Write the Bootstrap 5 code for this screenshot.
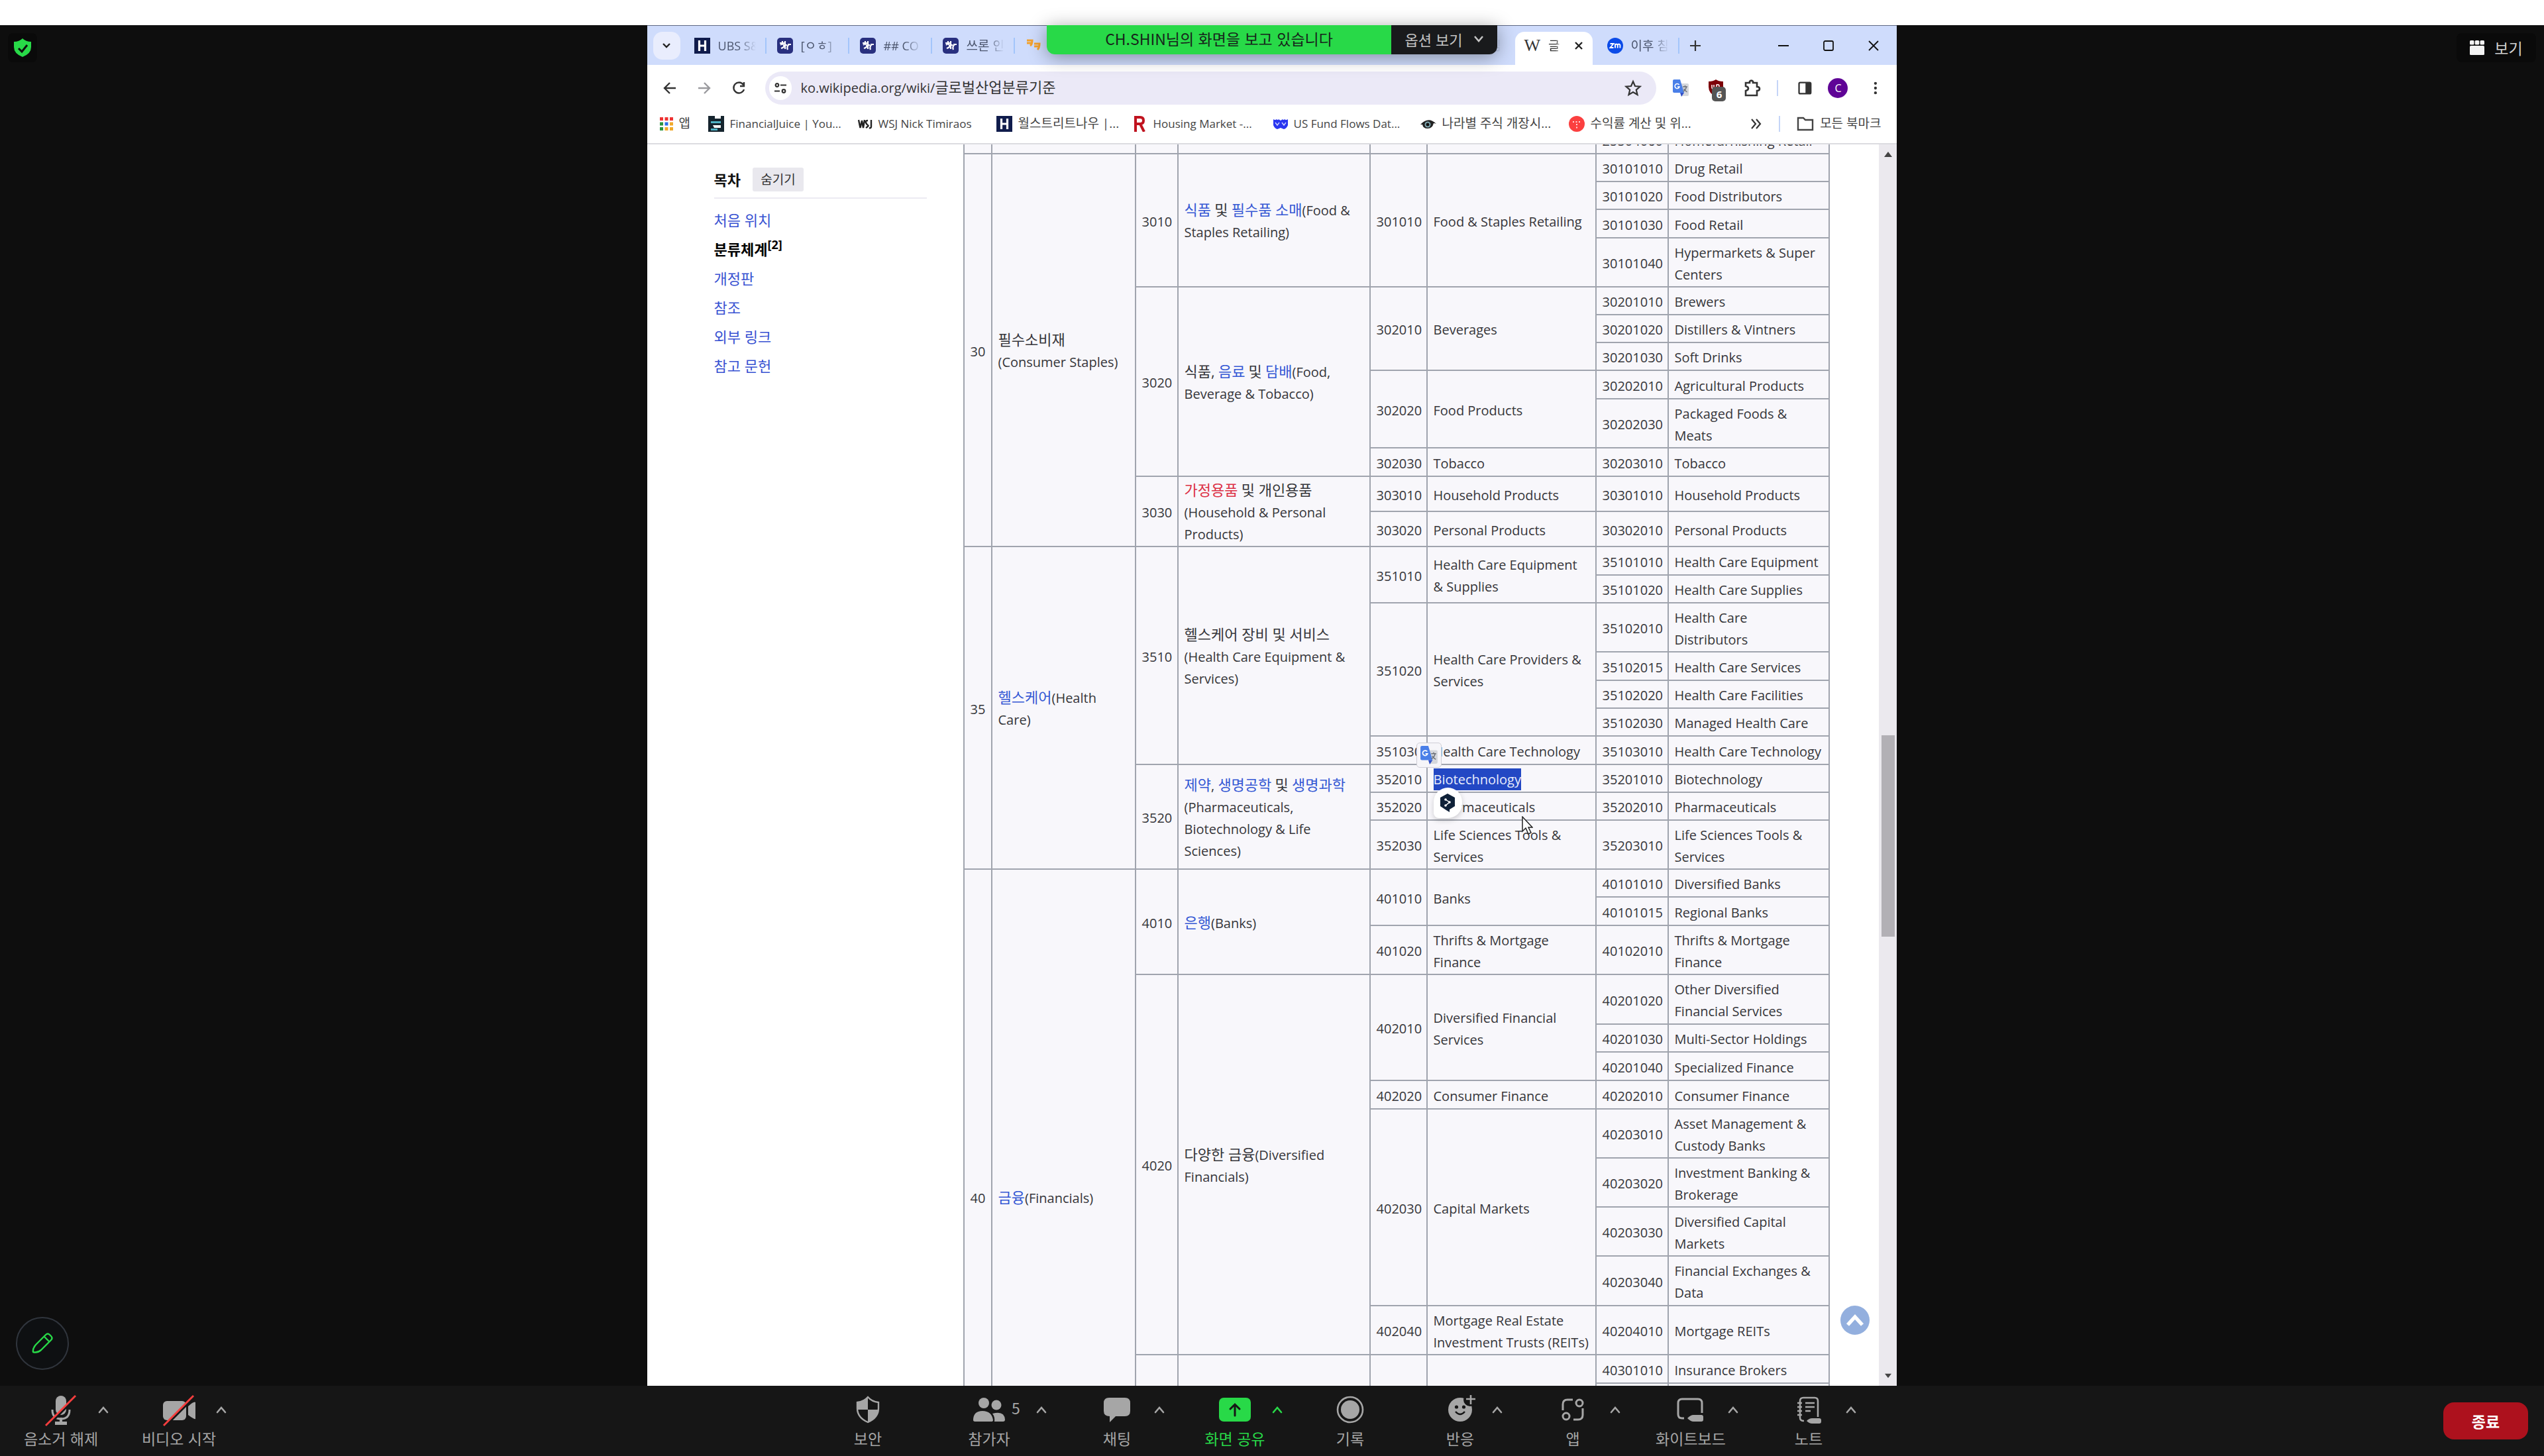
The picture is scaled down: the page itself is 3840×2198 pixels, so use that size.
<!DOCTYPE html>
<html lang="ko">
<head>
<meta charset="utf-8">
<meta name="viewport" content="width=device-width, initial-scale=1">
<title>글로벌산업분류기준</title>
<link href="https://cdn.jsdelivr.net/npm/bootstrap@5.3.0/dist/css/bootstrap.min.css" rel="stylesheet">
<style>
html,body{height:100%}
body{font-family:"Noto Sans CJK KR","Open Sans",sans-serif;background:#fff;padding-top:38px;overflow:hidden}
svg{display:block;flex:none}
button{color:inherit}
.bare{background:none;border:0;padding:0;color:inherit;display:flex;align-items:center;justify-content:center}
/* meeting stage */
.stage{background:#0e0e0e;min-height:0}
.shield{left:12px;top:12px;width:44px;height:44px;border-radius:8px;background:#0a0a0a}
.viewbtn{right:12px;top:12px;width:120px;height:44px;border-radius:8px;background:#0a0a0a;color:#d0d0d0;font-size:23px;gap:15px}
.pen{left:24px;bottom:24px;width:80px;height:80px;border-radius:50%;background:#0e1012;border:2px solid #30353d}
.banner{left:50%;top:0;margin-left:-340px;height:44px;border-radius:0 0 12px 12px;overflow:hidden;font-size:23px;line-height:40px;z-index:5}
.bannershade{left:50%;top:0;margin-left:-340px;width:680px;height:44px;border-radius:0 0 12px 12px;box-shadow:0 4px 28px rgba(0,0,0,.38);z-index:4}
.msg{width:520px;background:#28d948;color:#17251b;text-align:center}
.opt{width:160px;background:#191a1c;color:#c4c4c4;font-size:22px;line-height:40px;padding-bottom:3px}
/* shared browser window */
.win{width:49.14vw;background:#fff;font-family:"Open Sans","Noto Sans CJK KR",sans-serif;color:#333;overflow:hidden}
.ko{font-size:22px;line-height:1}
.tabs{height:60px;background:#cfdcfc;border-top:1px solid #5d6783;padding-left:9px}
.tabmenu{width:41px;height:42px;border-radius:14px;background:#e9edfd;margin:0 5px 4px 0}
.tabx{width:125px;height:50px;padding:0 16px;font-size:18px;color:#4c566e;position:relative}
.tabx::after{content:"";position:absolute;right:0;top:9px;height:24px;width:2px;background:#a3c5fb}
.tabx.nosep::after{display:none}
.tabtext{width:57px;margin-left:12px;white-space:nowrap;-webkit-mask-image:linear-gradient(90deg,#000 55%,transparent)}
.tabrow{height:42px}
.kt{font-size:19px;line-height:1}
.activetab{background:#fff;border-radius:14px 14px 0 0;color:#333;margin:0 6px 0 5px;width:117px;padding:0 14px}
.activetab .tabtext{width:20px}
.serifw{font-family:"Liberation Serif",serif;font-size:26px;line-height:1}
.winctl{gap:52px;padding-right:27px;height:42px}
.toolbar2{height:69px;padding:0 24px;background:#fff}
.pill{height:50px;border-radius:25px;background:#ebe9f7;padding:0 22px 0 6px;margin-left:30px}
.siteinfo{width:34px;height:36px;border-radius:17px;background:#fff;margin-right:14px}
.url{font-size:20px;color:#333}
.extbadge{left:10px;top:11px;width:21px;height:22px;border-radius:5px;background:#555;color:#fff;font-size:15px;line-height:22px;text-align:center;font-weight:700}
.avatarc{width:30px;height:30px;border-radius:50%;background:#5f0396;color:#fff;font-size:16px;line-height:30px;text-align:center}
.vsep{width:2px;height:24px;background:#c5d5f7}
.marks{display:grid;grid-template-columns:73px 226px 209px 204px 214px 222px 224px 1fr auto;height:51px;padding:0 24px 10px 19px;border-bottom:2px solid #dcdce0;font-size:17px}
.marks a{color:#444;text-decoration:none;white-space:nowrap;display:flex;align-items:center;gap:9px}
/* article */
.toc{width:321px;margin:35px 55px 0 101px}
.toc a{color:#3852d2;text-decoration:none}
.tochead{height:47px;border-bottom:2px solid #eceaf2;padding-bottom:9px;color:#111}
.hidebtn{width:77px;height:36px;background:#e9e8ee;border-radius:3px;margin-left:18px;font-size:19px;color:#333}
.toclist{margin-top:10px}
.toc li{height:44px;line-height:44px;font-size:22px}
.toc sup{font-size:18px}
.clip{flex:1 1 0;min-height:0;overflow:hidden}
.gics{width:1306px;margin-top:-29px;table-layout:fixed;border-collapse:collapse;font-size:20px;line-height:33px;color:#333}
.gics>tbody>tr>td{border:2px solid #a0a4ae;border-width:2px;padding:4px 9px 1px;vertical-align:middle;white-space:nowrap;background:#f8f7fb;color:#36363a;box-shadow:none}
.gics a{color:#3558d4;text-decoration:none;font-size:22px;line-height:1}
.gics a.newpage{color:#dc3045}
.s{height:42px}.s1{height:43px}.m{height:53px}.d{height:74px}.d1{height:75px}.rest{height:213px}
.picked{position:relative;display:inline-block;height:33px;background:#2348c4;color:#e8ecfb}
.trbox{left:-26px;top:-39px;width:38px;height:38px;background:#f6f5f9;border:1px solid #cfced6;border-radius:5px}
.bubble{left:0;top:29px;width:43px;height:46px;border-radius:22px 22px 22px 8px;background:#fff;box-shadow:0 3px 8px rgba(0,0,0,.18)}
.pointer{left:132px;top:72px}
.sbar{width:27px;background:#ebe9ee;padding:11px 0}
.above{flex:57 1 0}.below{flex:43 1 0}
.thumb{width:20px;height:304px;background:#b2b0b5}
.totop{right:41px;bottom:77px;width:44px;height:44px;border-radius:50%;background:#93afde}
/* meeting controls */
.controls{height:106px;background:#161616;color:#a6a6a6;padding:0 24px 0 36px}
.tool{width:112px;height:106px;flex-direction:column;justify-content:flex-start;padding-top:14px;font-size:23px;line-height:32px;white-space:nowrap}
.tool svg{margin-bottom:1px}
.caret{width:16px;height:72px}
.gap50{margin-right:50px}
.w96{width:96px}.w104{width:104px;margin-right:66px}.w124{width:124px}.w142{width:142px}
.count{left:105px;top:17px}
.on{color:#28d948}
.end{width:128px;height:56px;border-radius:16px;background:#ad111d;color:#fff;font-size:23px;font-weight:700}
</style>
</head>
<body class="d-flex flex-column">
<svg width="0" height="0" class="position-absolute" aria-hidden="true">
<defs>
<symbol id="up" viewBox="0 0 16 12"><path d="M2 10 8 3l6 7" fill="none" stroke="currentColor" stroke-width="2.6" stroke-linecap="round"/></symbol>
<symbol id="hfav" viewBox="0 0 24 24"><path fill="#101c4c" d="M0 0h24v24H0z"/><path d="M7.500 4v16M16.500 4v16M7.500 12h9" stroke="#fff" stroke-width="3.200" fill="none"/></symbol>
<symbol id="dc" viewBox="0 0 24 24"><rect width="24" height="24" rx="5" fill="#29307f"/><path d="M4 8h8M8 5v4M5 11q3-3 5 0t-4 5M12 5v12M12 11h3M18 10q-4 3-2 8M16 10h5" stroke="#fff" stroke-width="2.200" fill="none"/></symbol>
<symbol id="zm" viewBox="0 0 24 24"><circle cx="12" cy="12" r="12" fill="#0b4be8"/><path d="M4.500 9h5l-5 6h5M12 15.500V9m0 2q2-3 3.700 0v4.500m0-4.500q2-3 3.700 0v4.500" stroke="#fff" stroke-width="1.900" fill="none"/></symbol>
<symbol id="trans" viewBox="0 0 24 26"><path fill="#d5d7dc" d="M9 6h13q2 0 2 2v15q0 2-2 2h-8z"/><path fill="#4a7fe8" d="M2 0h9l6 20H2q-2 0-2-2V2q0-2 2-2z"/><path fill="#3150c8" d="m11 20h6l-4 6z"/><path d="M9.500 8A3.500 3.500 0 1 0 10 11H7" stroke="#fff" stroke-width="1.600" fill="none"/><path d="M15 11h7m-3.500-2v2m2 0q-1 5-5 7m1-4q2 3 5 5" stroke="#6b7078" stroke-width="1.400" fill="none"/></symbol>
</defs>
</svg>

<main class="stage position-relative flex-grow-1 d-flex justify-content-center">
  <div class="shield position-absolute d-flex align-items-center justify-content-center"><svg width="26" height="28" viewBox="0 0 26 28" role="img" aria-label="암호화됨"><path d="M13 0q5 5 13 5v8q0 10-13 15Q0 23 0 13V5q8 0 13-5z" fill="#28d948"/><path d="m7 15 5 5 8-10" stroke="#0e0e0e" stroke-width="3" fill="none"/></svg></div>

  <div class="bannershade position-absolute"></div>
  <div class="banner position-absolute d-flex">
    <div class="msg">CH.SHIN님의 화면을 보고 있습니다</div>
    <button class="bare opt gap-3">옵션 보기 <svg width="16" height="12" viewBox="0 0 16 12"><path d="m2 2 6 7 6-7" fill="none" stroke="currentColor" stroke-width="2.600"/></svg></button>
  </div>

  <section class="win d-flex flex-column position-relative">
    <div class="tabs flex-shrink-0 d-flex align-items-end">
      <div class="d-flex align-items-center h-100"><button class="bare tabmenu mt-1" aria-label="탭 검색"><svg width="12" height="9" viewBox="0 0 12 9"><path d="m1 2 5 5 5-5" fill="none" stroke="#222" stroke-width="2.400"/></svg></button></div>
      <div class="tabx"><div class="tabrow d-flex align-items-center"><svg width="24" height="24"><use href="#hfav"/></svg><span class="tabtext">UBS S&amp;</span></div></div>
      <div class="tabx"><div class="tabrow d-flex align-items-center"><svg width="24" height="24"><use href="#dc"/></svg><span class="tabtext kt">[ㅇㅎ]</span></div></div>
      <div class="tabx"><div class="tabrow d-flex align-items-center"><svg width="24" height="24"><use href="#dc"/></svg><span class="tabtext">## CO</span></div></div>
      <div class="tabx"><div class="tabrow d-flex align-items-center"><svg width="24" height="24"><use href="#dc"/></svg><span class="tabtext kt">쓰론 인</span></div></div>
      <div class="tabx"><div class="tabrow d-flex align-items-center"><svg width="24" height="24" viewBox="0 0 24 24"><path d="M2 4h8q0 6-3 8M2 8h7M13 9h8q0 6-3 9M13 13h7" stroke="#f4a12c" stroke-width="3" fill="none"/></svg></div></div>
      <div class="tabx"></div><div class="tabx"></div><div class="tabx"></div><div class="tabx"></div>
      <div class="tabx nosep"><div class="tabrow d-flex align-items-center"><svg width="24" height="24"><use href="#zm"/></svg><span class="tabtext kt">이후 침</span></div></div>
      <div class="tabx nosep activetab"><div class="tabrow d-flex align-items-center"><span class="serifw">W</span><span class="tabtext kt">글</span><button class="bare ms-auto" aria-label="탭 닫기"><svg width="14" height="14" viewBox="0 0 14 14"><path d="m2 2 10 10M12 2 2 12" stroke="#222" stroke-width="2.400"/></svg></button></div></div>
      <div class="tabx"><div class="tabrow d-flex align-items-center"><svg width="24" height="24"><use href="#zm"/></svg><span class="tabtext kt">이후 침</span></div></div>
      <div class="tabrow d-flex align-items-center mb-2 ms-3"><button class="bare" aria-label="새 탭"><svg width="16" height="16" viewBox="0 0 16 16"><path d="M8 0v16M0 8h16" stroke="#333" stroke-width="2.200"/></svg></button></div>
      <div class="winctl d-flex align-items-center ms-auto mb-2">
        <button class="bare" aria-label="최소화"><svg width="16" height="16" viewBox="0 0 16 16"><path d="M0 8h16" stroke="#111" stroke-width="2"/></svg></button>
        <button class="bare" aria-label="최대화"><svg width="16" height="16" viewBox="0 0 16 16"><rect x="1" y="1" width="14" height="14" rx="2" stroke="#111" stroke-width="1.800" fill="none"/></svg></button>
        <button class="bare" aria-label="닫기"><svg width="16" height="16" viewBox="0 0 16 16"><path d="m1 1 14 14M15 1 1 15" stroke="#111" stroke-width="1.800"/></svg></button>
      </div>
    </div>

    <div class="toolbar2 flex-shrink-0 d-flex align-items-center">
      <button class="bare" aria-label="뒤로"><svg width="20" height="20" viewBox="0 0 20 20"><path d="M19 10H2m8-8-8 8 8 8" stroke="#333" stroke-width="2.400" fill="none"/></svg></button>
      <button class="bare ms-4 ps-2" aria-label="앞으로"><svg width="20" height="20" viewBox="0 0 20 20"><path d="M1 10h17m-8-8 8 8-8 8" stroke="#9a9a9e" stroke-width="2.400" fill="none"/></svg></button>
      <button class="bare ms-4 ps-2" aria-label="새로고침"><svg width="20" height="20" viewBox="0 0 20 20"><path d="M17 5a8 8 0 1 0 1 7M18 1v6h-6" stroke="#333" stroke-width="2.400" fill="none"/></svg></button>
      <div class="pill flex-grow-1 d-flex align-items-center">
        <span class="siteinfo d-flex align-items-center justify-content-center"><svg width="18" height="16" viewBox="0 0 18 16"><g fill="none" stroke="#333" stroke-width="2.200"><circle cx="4" cy="3.500" r="2.300"/><path d="M9 3.500h9M0 12.500h8"/><circle cx="14" cy="12.500" r="2.300"/></g></svg></span>
        <div class="url flex-grow-1">ko.wikipedia.org/wiki/<span class="ko">글로벌산업분류기준</span></div>
        <svg width="26" height="26" viewBox="0 0 26 26"><path d="m13 3 3 7 7.500.7-5.700 5 1.700 7.300-6.500-4-6.500 4 1.700-7.300-5.700-5L10 10z" fill="none" stroke="#333" stroke-width="2.200"/></svg>
      </div>
      <div class="d-flex align-items-center ms-4">
        <svg width="26" height="26"><use href="#trans"/></svg>
        <div class="position-relative ms-4 ps-1"><svg width="24" height="26" viewBox="0 0 24 26"><path d="M12 0q4 3 11 3v8q0 10-11 15Q1 21 1 11V3q7 0 11-3z" fill="#7d0008"/><path d="M6 8v4q0 3 3 2V8m4 8V8q4-1 4 2t-4 3" stroke="#fff" stroke-width="1.500" fill="none"/></svg><span class="extbadge position-absolute">6</span></div>
        <svg class="ms-4 ps-1" width="32" height="28" viewBox="-4 0 28 28"><path d="M3 6h6V4a3 3 0 0 1 5 0v2h6v6q4 0 4 3t-4 3v7H3v-7q4-1 4-3.500T3 11z" transform="translate(-2)" fill="none" stroke="#333" stroke-width="2.600"/></svg>
        <span class="vsep ms-4"></span>
        <svg class="ms-4 ps-1" width="27" height="22" viewBox="-3 0 26 22"><rect x="1" y="1.500" width="20" height="19" rx="2" fill="none" stroke="#333" stroke-width="2.600"/><path d="M12 2h9v18h-9z" fill="#333"/></svg>
        <span class="avatarc ms-4">C</span>
        <svg class="ms-4 ps-2" width="26" height="22" viewBox="-8 0 20 22"><g fill="#333"><circle cx="3" cy="3" r="2.400"/><circle cx="3" cy="11" r="2.400"/><circle cx="3" cy="19" r="2.400"/></g></svg>
      </div>
    </div>

    <nav class="marks flex-shrink-0">
      <a href="#"><svg width="20" height="20" viewBox="0 0 20 20"><g fill="#e33"><path d="M0 0h5v5H0zM7.500 0h5v5h-5zM15 0h5v5h-5z"/></g><path fill="#2a9440" d="M0 7.500h5v5H0zM0 15h5v5H0z"/><path fill="#2b6fe8" d="M7.500 7.500h5v5h-5z"/><path fill="#f0a92a" d="M15 7.500h5v5h-5zM7.500 15h5v5h-5zM15 15h5v5h-5z"/></svg><span class="kt">앱</span></a>
      <a href="#"><svg width="24" height="24" viewBox="0 0 24 24"><path fill="#15242e" d="M0 0h24v24H0z"/><path d="M10 0h9v4h-9zM7 14h12v4H9z" fill="#fff"/><path d="M4 8h15v3H4zM4 19h10v3H4z" fill="#4fb3c4"/></svg>FinancialJuice | You...</a>
      <a href="#"><svg width="22" height="24" viewBox="0 0 22 24"><path d="m1 6 2.500 12L6 7l2 11L10 6M15 7q-4 0-3 3t3 4-3 4M20 6v10q0 3-3 2" stroke="#222" stroke-width="2.400" fill="none"/></svg>WSJ Nick Timiraos</a>
      <a href="#"><svg width="24" height="24"><use href="#hfav"/></svg><span class="kt">월스트리트나우 |...</span></a>
      <a href="#"><svg width="24" height="24" viewBox="0 0 24 24"><path d="M6 24V2h7q5 0 5 5t-5 5H6m7 0 6 12" stroke="#c0131f" stroke-width="4" fill="none"/></svg>Housing Market -...</a>
      <a href="#"><svg width="22" height="24" viewBox="0 0 22 24"><path d="M0 5q3 2 5 0 2 2 3 0l3 2 3-2q1 2 3 0 2 2 5 0v9q-2 5-6 6l-5-2-5 2q-4-1-6-6z" fill="#2a36f0"/><path d="m3 10 3 4 3-4m4 0 3 4 3-4" stroke="#cfd3ff" stroke-width="1.400" fill="none"/></svg>US Fund Flows Dat...</a>
      <a href="#"><svg width="24" height="24" viewBox="0 0 24 24"><path d="M0 13Q12 0 24 12q-2-1-4-1-2 8-9 8T3 13z" fill="#222"/><circle cx="11" cy="13" r="4.500" fill="#7fa7b0"/><circle cx="11" cy="13" r="2.500" fill="#111"/></svg><span class="kt">나라별 주식 개장시...</span></a>
      <a href="#"><svg width="24" height="24" viewBox="0 0 24 24"><circle cx="12" cy="12" r="12" fill="#fb4040"/><path d="M6 9h12M12 12v7" stroke="#ffd9d9" stroke-width="2" stroke-dasharray="2 2.500"/></svg><span class="kt">수익률 계산 및 위...</span></a>
      <a href="#"><svg width="18" height="16" viewBox="0 0 18 16"><path d="m2 1 6 7-6 7m7-14 6 7-6 7" fill="none" stroke="#333" stroke-width="2.200"/></svg><span class="vsep mx-3"></span><svg width="26" height="22" viewBox="0 0 26 22"><path d="M2 2h8l3 3h11v15H2z" fill="none" stroke="#444" stroke-width="2.400"/></svg><span class="kt">모든 북마크</span></a>
    </nav>

    <div class="clip d-flex">
      <aside class="toc flex-shrink-0">
        <div class="tochead d-flex align-items-center"><strong class="ko">목차</strong><button class="bare hidebtn">숨기기</button></div>
        <ul class="list-unstyled toclist">
          <li><a href="#">처음 위치</a></li>
          <li class="fw-bold text-black">분류체계<sup>[2]</sup></li>
          <li><a href="#">개정판</a></li>
          <li><a href="#">참조</a></li>
          <li><a href="#">외부 링크</a></li>
          <li><a href="#">참고 문헌</a></li>
        </ul>
      </aside>
      <div class="flex-grow-1">
        <table class="table gics mb-0">
          <colgroup><col style="width:42px"><col style="width:217px"><col style="width:64px"><col style="width:290px"><col style="width:86px"><col style="width:255px"><col style="width:109px"><col style="width:243px"></colgroup>
          <tbody>
            <tr class="s"><td></td><td></td><td></td><td></td><td></td><td></td><td>25504060</td><td>Homefurnishing Retail</td></tr>
            <tr class="s"><td rowspan="12">30</td><td rowspan="12"><span class="ko">필수소비재</span><br>(Consumer Staples)</td><td rowspan="4">3010</td><td rowspan="4"><a href="#">식품</a> <span class="ko">및</span> <a href="#">필수품 소매</a>(Food &amp;<br>Staples Retailing)</td><td rowspan="4">301010</td><td rowspan="4">Food &amp; Staples Retailing</td><td>30101010</td><td>Drug Retail</td></tr>
            <tr class="s"><td>30101020</td><td>Food Distributors</td></tr>
            <tr class="s1"><td>30101030</td><td>Food Retail</td></tr>
            <tr class="d"><td>30101040</td><td>Hypermarkets &amp; Super<br>Centers</td></tr>
            <tr class="s"><td rowspan="6">3020</td><td rowspan="6"><span class="ko">식품,</span> <a href="#">음료</a> <span class="ko">및</span> <a href="#">담배</a>(Food,<br>Beverage &amp; Tobacco)</td><td rowspan="3">302010</td><td rowspan="3">Beverages</td><td>30201010</td><td>Brewers</td></tr>
            <tr class="s"><td>30201020</td><td>Distillers &amp; Vintners</td></tr>
            <tr class="s"><td>30201030</td><td>Soft Drinks</td></tr>
            <tr class="s1"><td rowspan="2">302020</td><td rowspan="2">Food Products</td><td>30202010</td><td>Agricultural Products</td></tr>
            <tr class="d"><td>30202030</td><td>Packaged Foods &amp;<br>Meats</td></tr>
            <tr class="s1"><td>302030</td><td>Tobacco</td><td>30203010</td><td>Tobacco</td></tr>
            <tr class="m"><td rowspan="2">3030</td><td rowspan="2"><a class="newpage" href="#">가정용품</a> <span class="ko">및 개인용품</span><br>(Household &amp; Personal<br>Products)</td><td>303010</td><td>Household Products</td><td>30301010</td><td>Household Products</td></tr>
            <tr class="m"><td>303020</td><td>Personal Products</td><td>30302010</td><td>Personal Products</td></tr>
            <tr class="s1"><td rowspan="10">35</td><td rowspan="10"><a href="#">헬스케어</a>(Health<br>Care)</td><td rowspan="7">3510</td><td rowspan="7"><span class="ko">헬스케어 장비 및 서비스</span><br>(Health Care Equipment &amp;<br>Services)</td><td rowspan="2">351010</td><td rowspan="2">Health Care Equipment<br>&amp; Supplies</td><td>35101010</td><td>Health Care Equipment</td></tr>
            <tr class="s"><td>35101020</td><td>Health Care Supplies</td></tr>
            <tr class="d"><td rowspan="4">351020</td><td rowspan="4">Health Care Providers &amp;<br>Services</td><td>35102010</td><td>Health Care<br>Distributors</td></tr>
            <tr class="s1"><td>35102015</td><td>Health Care Services</td></tr>
            <tr class="s"><td>35102020</td><td>Health Care Facilities</td></tr>
            <tr class="s"><td>35102030</td><td>Managed Health Care</td></tr>
            <tr class="s1"><td>351030</td><td>Health Care Technology</td><td>35103010</td><td>Health Care Technology</td></tr>
            <tr class="s"><td rowspan="3">3520</td><td rowspan="3"><a href="#">제약</a>, <a href="#">생명공학</a> <span class="ko">및</span> <a href="#">생명과학</a><br>(Pharmaceuticals,<br>Biotechnology &amp; Life<br>Sciences)</td><td>352010</td><td><span class="picked">Biotechnology
              <span class="trbox position-absolute d-flex align-items-center justify-content-center"><svg width="26" height="28"><use href="#trans"/></svg></span>
              <span class="bubble position-absolute d-flex align-items-center justify-content-center"><svg width="24" height="28" viewBox="0 0 24 28"><path d="m12 0 11 6v13l-8 5v4l-5-3-9-6V6z" fill="#0f2138"/><path d="m9 9 6 4-6 5" stroke="#fff" stroke-width="1.500" fill="none"/><circle cx="9" cy="9" r="1.800" fill="#fff"/><circle cx="15" cy="13" r="1.800" fill="#fff"/><circle cx="9" cy="18" r="1.800" fill="#fff"/></svg></span>
              <svg class="pointer position-absolute" width="18" height="30" viewBox="0 0 18 30"><path d="M2 1v22l5-5 4 9 4-2-4-8h6z" fill="#fff" stroke="#222" stroke-width="1.500"/></svg></span></td><td>35201010</td><td>Biotechnology</td></tr>
            <tr class="s"><td>352020</td><td>Pharmaceuticals</td><td>35202010</td><td>Pharmaceuticals</td></tr>
            <tr class="d"><td>352030</td><td>Life Sciences Tools &amp;<br>Services</td><td>35203010</td><td>Life Sciences Tools &amp;<br>Services</td></tr>
            <tr class="s"><td rowspan="14">40</td><td rowspan="14"><a href="#">금융</a>(Financials)</td><td rowspan="3">4010</td><td rowspan="3"><a href="#">은행</a>(Banks)</td><td rowspan="2">401010</td><td rowspan="2">Banks</td><td>40101010</td><td>Diversified Banks</td></tr>
            <tr class="s1"><td>40101015</td><td>Regional Banks</td></tr>
            <tr class="d"><td>401020</td><td>Thrifts &amp; Mortgage<br>Finance</td><td>40102010</td><td>Thrifts &amp; Mortgage<br>Finance</td></tr>
            <tr class="d1"><td rowspan="9">4020</td><td rowspan="9"><span class="ko">다양한 금융</span>(Diversified<br>Financials)</td><td rowspan="3">402010</td><td rowspan="3">Diversified Financial<br>Services</td><td>40201020</td><td>Other Diversified<br>Financial Services</td></tr>
            <tr class="s"><td>40201030</td><td>Multi-Sector Holdings</td></tr>
            <tr class="s1"><td>40201040</td><td>Specialized Finance</td></tr>
            <tr class="s1"><td>402020</td><td>Consumer Finance</td><td>40202010</td><td>Consumer Finance</td></tr>
            <tr class="d"><td rowspan="4">402030</td><td rowspan="4">Capital Markets</td><td>40203010</td><td>Asset Management &amp;<br>Custody Banks</td></tr>
            <tr class="d"><td>40203020</td><td>Investment Banking &amp;<br>Brokerage</td></tr>
            <tr class="d"><td>40203030</td><td>Diversified Capital<br>Markets</td></tr>
            <tr class="d1"><td>40203040</td><td>Financial Exchanges &amp;<br>Data</td></tr>
            <tr class="d"><td>402040</td><td>Mortgage Real Estate<br>Investment Trusts (REITs)</td><td>40204010</td><td>Mortgage REITs</td></tr>
            <tr class="s1"><td rowspan="2"></td><td rowspan="2"></td><td rowspan="2"></td><td rowspan="2"></td><td>40301010</td><td>Insurance Brokers</td></tr>
            <tr class="rest"><td></td><td></td></tr>
          </tbody>
        </table>
      </div>
      <div class="sbar d-flex flex-column align-items-center flex-shrink-0">
        <svg width="12" height="8" viewBox="0 0 12 8"><path d="m6 0 6 8H0z" fill="#444"/></svg>
        <div class="above"></div>
        <div class="thumb"></div>
        <div class="below"></div>
        <svg width="10" height="8" viewBox="0 0 12 8"><path d="m6 8 6-8H0z" fill="#444"/></svg>
      </div>
    </div>
    <button class="bare totop position-absolute" aria-label="맨 위로"><svg width="28" height="20" viewBox="0 0 28 20"><path d="M3 17 14 5l11 12" stroke="#fff" stroke-width="5.500" fill="none"/></svg></button>
  </section>

  <button class="bare viewbtn position-absolute"><svg width="22" height="22" viewBox="0 0 22 22"><g fill="#f2f2f2"><rect width="6.500" height="6.500" rx="1.500"/><rect x="7.750" width="6.500" height="6.500" rx="1.500"/><rect x="15.500" width="6.500" height="6.500" rx="1.500"/><rect y="8" width="22" height="14" rx="1.500"/></g></svg>보기</button>
  <button class="bare pen position-absolute" aria-label="주석"><svg width="32" height="32" viewBox="0 0 32 32"><g fill="none" stroke="#28d948" stroke-width="2.400" stroke-linejoin="round"><path d="M2 29q-1-5 4-11L21 3q3-3 6 0l2 2q3 3 0 6L14 26q-6 5-12 3z"/><path d="m19 6 7 7"/></g></svg></button>
</main>

<footer class="controls flex-shrink-0 d-flex align-items-center justify-content-between">
  <div class="d-flex">
    <button class="bare tool"><svg width="48" height="48" viewBox="0 0 48 48"><g fill="#a6a6a6"><rect x="16" y="1" width="16" height="29" rx="8"/><path d="M15 40h18v5H15zM22 34h4v8h-4z"/></g><path d="M11 22q0 14 13 14t13-14" fill="none" stroke="#a6a6a6" stroke-width="3"/><path d="M4 46 48 2" stroke="#161616" stroke-width="4"/><path d="M1 46 46 1" stroke="#fa3e3e" stroke-width="2.800"/></svg>음소거 해제</button>
    <button class="bare caret gap50" aria-label="오디오 옵션"><svg width="16" height="12"><use href="#up"/></svg></button>
    <button class="bare tool"><svg width="50" height="48" viewBox="0 0 50 48"><g fill="#a6a6a6"><rect x="1" y="9" width="35" height="29" rx="6"/><path d="M39 17q9-8 11-6v25q-2 1-11-6z"/></g><path d="M5 46 49 2" stroke="#161616" stroke-width="4"/><path d="M2 46 47 1" stroke="#fa3e3e" stroke-width="2.800"/></svg>비디오 시작</button>
    <button class="bare caret" aria-label="비디오 옵션"><svg width="16" height="12"><use href="#up"/></svg></button>
  </div>
  <div class="d-flex ps-3 ms-1">
    <button class="bare tool w124 gap50"><svg width="38" height="48" viewBox="0 0 38 48"><path d="M19 3q6 7 16 8v9q0 14-16 21Q3 34 3 20v-9q10-1 16-8z" fill="none" stroke="#a6a6a6" stroke-width="2.400"/><path d="M19 2v20H3V11q10-1 16-9zM19 22h16q-1 13-16 20z" fill="#a6a6a6"/></svg>보안</button>
    <button class="bare tool w142 position-relative"><svg width="50" height="48" viewBox="0 0 50 48"><g fill="#a6a6a6"><circle cx="17" cy="12" r="8"/><circle cx="36" cy="15" r="7.500"/><path d="M1 38q0-14 14-14t16 14q0 2-3 2H5q-4 0-4-2zM33 40q1-7-3-12 18-5 19 9 0 3-3 3z"/></g></svg>참가자<span class="count position-absolute">5</span></button>
    <button class="bare caret gap50" aria-label="참가자 옵션"><svg width="16" height="12"><use href="#up"/></svg></button>
    <button class="bare tool"><svg width="42" height="48" viewBox="0 0 42 48"><path d="M9 4h24q8 0 8 8v12q0 8-8 8H19l-9 9v-9q-9 0-9-8V12q0-8 8-8z" fill="#a6a6a6"/></svg>채팅</button>
    <button class="bare caret gap50" aria-label="채팅 옵션"><svg width="16" height="12"><use href="#up"/></svg></button>
    <button class="bare tool on"><svg width="48" height="48" viewBox="0 0 48 48"><rect y="4" width="48" height="36" rx="7" fill="#28d948"/><path d="M24 31V14m-7 7 7-7 7 7" stroke="#161616" stroke-width="3" fill="none" stroke-linecap="round"/></svg>화면 공유</button>
    <button class="bare caret gap50 on" aria-label="공유 옵션"><svg width="16" height="12"><use href="#up"/></svg></button>
    <button class="bare tool w104"><svg width="42" height="48" viewBox="0 0 42 48"><circle cx="21" cy="22" r="19" fill="none" stroke="#a6a6a6" stroke-width="2.600"/><circle cx="21" cy="22" r="14" fill="#a6a6a6"/></svg>기록</button>
    <button class="bare tool w96"><svg width="48" height="48" viewBox="-3 0 48 48"><circle cx="21" cy="22" r="18" fill="#a6a6a6"/><circle cx="36" cy="7" r="10" fill="#161616"/><path d="M37-1v15M30 6h14" stroke="#a6a6a6" stroke-width="2.600"/><g fill="#161616"><circle cx="15.500" cy="18" r="2.600"/><circle cx="26.500" cy="18" r="2.600"/></g><path d="M14 25q7 8 14 0" stroke="#161616" stroke-width="2.400" fill="none"/></svg>반응</button>
    <button class="bare caret gap50" aria-label="반응 옵션"><svg width="16" height="12"><use href="#up"/></svg></button>
    <button class="bare tool"><svg width="34" height="48" viewBox="0 0 34 48"><g fill="none" stroke="#a6a6a6" stroke-width="3"><path d="M2 23v-9q0-7 7-7h8M32 20v10q0 7-7 7h-7"/><circle cx="27" cy="12" r="5"/><circle cx="7" cy="32" r="5"/></g></svg>앱</button>
    <button class="bare caret gap50" aria-label="앱 옵션"><svg width="16" height="12"><use href="#up"/></svg></button>
    <button class="bare tool"><svg width="42" height="48" viewBox="0 0 42 48"><path d="M11 35H8q-6 0-6-6V12q0-6 6-6h24q6 0 6 6v15" fill="none" stroke="#a6a6a6" stroke-width="3"/><path d="M16 35q5-5 9-5h12q3 0 3 3v4q0 3-3 3H25q-4 0-9-5z" fill="#a6a6a6"/></svg>화이트보드</button>
    <button class="bare caret gap50" aria-label="화이트보드 옵션"><svg width="16" height="12"><use href="#up"/></svg></button>
    <button class="bare tool"><svg width="38" height="48" viewBox="0 0 38 48"><g fill="none" stroke="#a6a6a6" stroke-width="2.600"><path d="M12 39q-6 0-6-5V9q0-5 5-5h17q5 0 5 5v24"/><path d="M2 12h7M2 18h7M2 24h7M2 30h7M14 12h14M14 18h14M14 24h8"/></g><path d="M16 39q4-4 8-4h11q3 0 3 3v2q0 3-3 3H24q-4 0-8-4z" fill="#a6a6a6"/></svg>노트</button>
    <button class="bare caret" aria-label="노트 옵션"><svg width="16" height="12"><use href="#up"/></svg></button>
  </div>
  <button class="bare end">종료</button>
</footer>
<script src="https://cdn.jsdelivr.net/npm/bootstrap@5.3.0/dist/js/bootstrap.bundle.min.js"></script>
</body>
</html>
